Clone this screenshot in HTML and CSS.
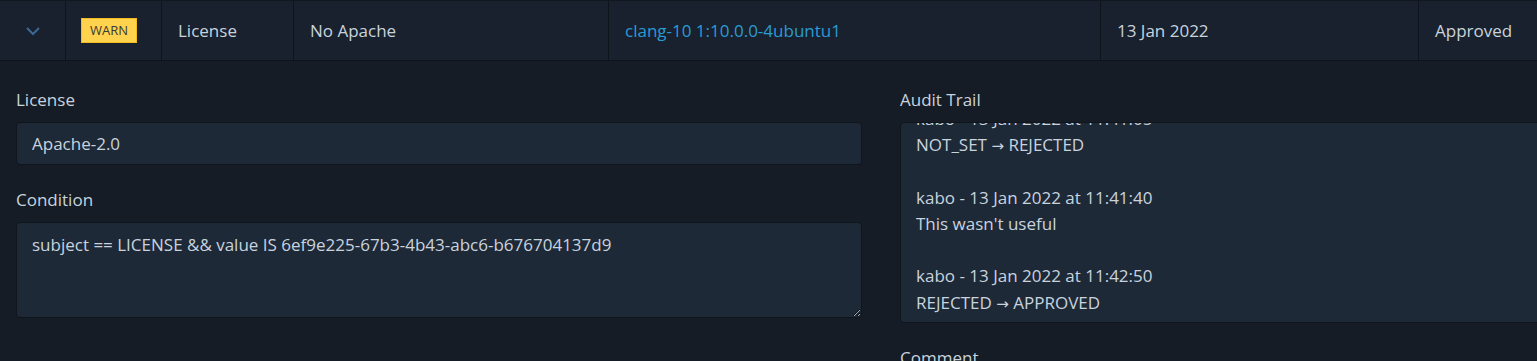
FILE: index.html
```html
<!DOCTYPE html>
<html lang="en">
<head>
<meta charset="utf-8">
<title>Violation</title>
<link rel="stylesheet" href="styles.css">
</head>
<body>
<div class="row">
  <div class="cell cell-toggle">
    <svg class="chevron" width="16" height="10" viewBox="0 0 16 10"><path d="M2 2 L8 8 L14 2" fill="none" stroke="#3d6893" stroke-width="2"/></svg>
  </div>
  <div class="cell cell-sev"><span class="badge">WARN</span></div>
  <div class="cell cell-type">License</div>
  <div class="cell cell-rule">No Apache</div>
  <div class="cell cell-pkg"><a class="link" href="#">clang-10 1:10.0.0-4ubuntu1</a></div>
  <div class="cell cell-date">13 Jan 2022</div>
  <div class="cell cell-status">Approved</div>
</div>
<div class="detail">
  <div class="col">
    <div class="field">
      <label class="label">License</label>
      <input class="input" type="text" value="Apache-2.0" readonly>
    </div>
    <div class="field">
      <label class="label">Condition</label>
      <textarea class="textarea" readonly>subject == LICENSE &amp;&amp; value IS 6ef9e225-67b3-4b43-abc6-b676704137d9</textarea>
    </div>
  </div>
  <div class="col">
    <div class="field">
      <label class="label">Audit Trail</label>
      <div class="audit"><div class="audit-text">kabo - 13 Jan 2022 at 11:41:05
NOT_SET <span class="arrow">→</span> REJECTED

kabo - 13 Jan 2022 at 11:41:40
This wasn't useful

kabo - 13 Jan 2022 at 11:42:50
REJECTED <span class="arrow">→</span> APPROVED</div></div>
    </div>
    <div class="field">
      <label class="label">Comment</label>
    </div>
  </div>
</div>
</body>
</html>
```

FILE: styles.css
```css
html, body {
  margin: 0;
  padding: 0;
  background: #151c25;
  overflow: hidden;
}
body {
  font-family: "Open Sans", "Noto Sans", sans-serif;
  font-size: 17px;
  color: #c8d3de;
  width: 1800px;
}
.row {
  display: flex;
  background: #18212d;
  border-top: 1px solid #10171f;
  border-bottom: 1px solid #0d141b;
  box-sizing: border-box;
  height: 61px;
}
.cell {
  box-sizing: border-box;
  border-right: 1px solid #0d141b;
  display: flex;
  align-items: center;
  padding: 0 16px;
  white-space: nowrap;
}
.cell-toggle { width: 66px; justify-content: center; padding: 0; }
.cell-sev { width: 96px; padding: 0 0 0 15px; }
.cell-type { width: 132px; }
.cell-rule { width: 315px; }
.cell-pkg { width: 492px; }
.cell-date { width: 318px; }
.cell-status { flex: 1; border-right: none; }
.chevron { display: block; }
.badge {
  display: inline-block;
  box-sizing: border-box;
  background: #ffd34e;
  border: 1px solid #f2bd1d;
  color: #3c3a36;
  font-size: 13px;
  line-height: 23px;
  height: 25px;
  width: 56px;
  text-align: center;
}
.link { color: #2a9bd5; text-decoration: none; }
.detail {
  display: grid;
  grid-template-columns: 846px 846px;
  column-gap: 38px;
  padding: 28px 16px 0;
}
.col { display: flex; flex-direction: column; gap: 24px; }
.field { display: flex; flex-direction: column; gap: 11px; }
.label { line-height: 22px; color: #c8d3de; }
.input, .textarea, .audit {
  box-sizing: border-box;
  background: #1e2938;
  border: 1px solid #0f151c;
  border-radius: 4px;
  color: #c8d3de;
  font: inherit;
  padding: 0 15px;
  width: 100%;
  color-scheme: dark;
}
.input { height: 43px; outline: none; }
.textarea {
  height: 96px;
  line-height: 26px;
  padding-top: 9px;
  resize: vertical;
  outline: none;
}
.audit {
  height: 201px;
  overflow: hidden;
  display: flex;
  flex-direction: column;
  justify-content: flex-end;
  padding-bottom: 6px;
}
.audit-text { white-space: pre-line; line-height: 26.3px; }
.arrow { font-family: "DejaVu Sans", sans-serif; font-size: 15px; line-height: 1; }
```
